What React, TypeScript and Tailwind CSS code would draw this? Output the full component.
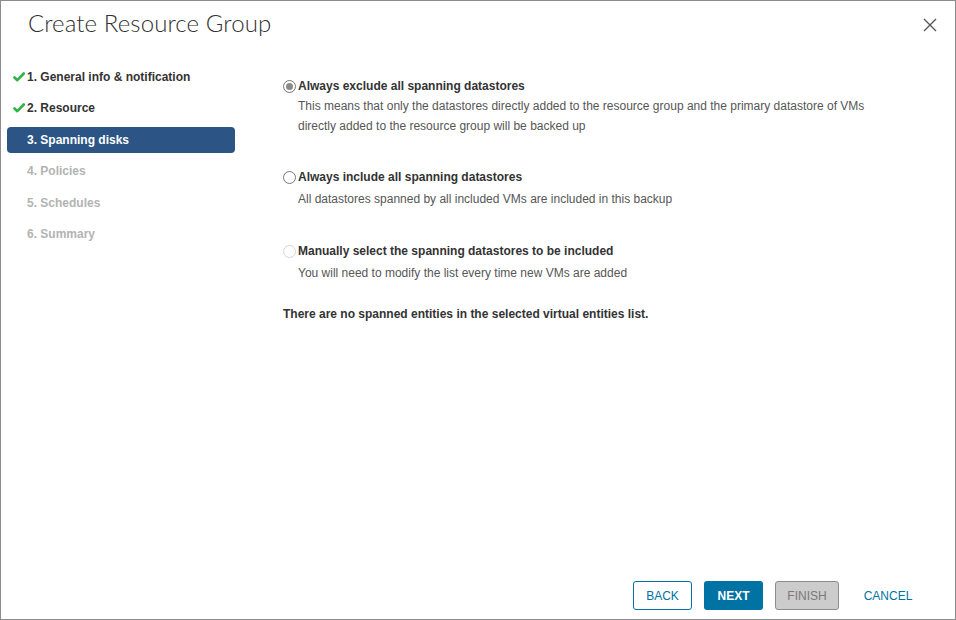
import React, { useState } from 'react';

// Kroki kreatora po lewej
const STEPS = [
  { label: '1. General info & notification', state: 'done' },
  { label: '2. Resource', state: 'done' },
  { label: '3. Spanning disks', state: 'active' },
  { label: '4. Policies', state: 'todo' },
  { label: '5. Schedules', state: 'todo' },
  { label: '6. Summary', state: 'todo' },
];

const OPTIONS = [
  {
    id: 'exclude',
    label: 'Always exclude all spanning datastores',
    desc: [
      'This means that only the datastores directly added to the resource group and the primary datastore of VMs',
      'directly added to the resource group will be backed up',
    ],
    disabled: false,
  },
  {
    id: 'include',
    label: 'Always include all spanning datastores',
    desc: ['All datastores spanned by all included VMs are included in this backup'],
    disabled: false,
  },
  {
    id: 'manual',
    label: 'Manually select the spanning datastores to be included',
    desc: ['You will need to modify the list every time new VMs are added'],
    disabled: true,
  },
];

function Check() {
  return (
    <svg width="12" height="10" viewBox="0 0 12 10" className="absolute left-[6px] top-[8px]">
      <path d="M1.5 5.5 L4.3 8.2 L10.8 1.5" fill="none" stroke="#2fb344" strokeWidth="2.6" strokeLinecap="round" strokeLinejoin="round" />
    </svg>
  );
}

function Radio({ checked, disabled }: { checked: boolean; disabled: boolean }) {
  return (
    <span
      className={`w-[13px] h-[13px] rounded-full border flex items-center justify-center bg-white shrink-0 ${
        disabled ? 'border-[#d4d4d4]' : 'border-[#767676]'
      }`}
    >
      {checked && <span className="w-[7px] h-[7px] rounded-full bg-[#8a8a8a]" />}
    </span>
  );
}

export default function App() {
  const [wybor, setWybor] = useState('exclude');

  return (
    <div
      className="w-[956px] h-[620px] bg-white border border-[#8c8c8c] flex flex-col"
      style={{ fontFamily: '"Liberation Sans", Arial, sans-serif' }}
    >
      {/* Nagłówek */}
      <div className="flex items-start justify-between h-[60px] pl-[27px] pr-[15px] pt-[4px]">
        <h1 className="text-[24px] font-light text-[#313131] tracking-[0.1px]" style={{ fontFamily: 'Lato, "Open Sans", sans-serif' }}>
          Create Resource Group
        </h1>
        <button className="mt-[10px] p-[3px]">
          <svg width="14" height="14" viewBox="0 0 14 14">
            <path d="M1 1 L13 13 M13 1 L1 13" stroke="#565656" strokeWidth="1.4" />
          </svg>
        </button>
      </div>

      <div className="flex flex-1">
        {/* Kroki */}
        <nav className="w-[240px] pl-[6px] pt-[2.5px] flex flex-col gap-[5.5px]">
          {STEPS.map((s) => (
            <div
              key={s.label}
              className={`relative h-[26px] w-[228px] pl-[20px] flex items-center text-[12px] font-bold rounded-[4px] ${
                s.state === 'active'
                  ? 'bg-[#2c5585] text-white'
                  : s.state === 'done'
                  ? 'text-[#333]'
                  : 'text-[#b3b3b3]'
              }`}
            >
              {s.state === 'done' && <Check />}
              {s.label}
            </div>
          ))}
        </nav>

        {/* Treść */}
        <main className="flex-1 pl-[42px] pt-[15px] text-[12px]">
          {OPTIONS.map((o, i) => (
            <div key={o.id} className={i === 0 ? '' : i === 1 ? 'mt-[31px]' : 'mt-[32px]'}>
              <label
                className="flex items-center gap-[2px] h-[20px] font-bold text-[#333] cursor-pointer"
                onClick={() => !o.disabled && setWybor(o.id)}
              >
                <Radio checked={wybor === o.id} disabled={o.disabled} />
                {o.label}
              </label>
              <div className={`pl-[15px] text-[#565656] leading-[20px] ${i === 0 ? '' : 'mt-[2px]'}`}>
                {o.desc.map((d) => (
                  <div key={d}>{d}</div>
                ))}
              </div>
            </div>
          ))}
          <p className="mt-[21px] leading-[20px] font-bold text-[#333]">
            There are no spanned entities in the selected virtual entities list.
          </p>
        </main>
      </div>

      {/* Przyciski */}
      <div className="flex justify-end items-center gap-[12px] pr-[30px] pb-[9px] text-[12px]">
        <button className="h-[29px] w-[59px] rounded-[3px] border border-[#0072a3] text-[#0072a3] bg-white">BACK</button>
        <button className="h-[29px] w-[59px] rounded-[3px] bg-[#0072a3] text-white font-bold">NEXT</button>
        <button className="h-[29px] w-[64px] rounded-[3px] border border-[#8c8c8c] bg-[#cccccc] text-[#7a7a7a]">FINISH</button>
        <button className="h-[29px] w-[74px] text-[#0072a3]">CANCEL</button>
      </div>
    </div>
  );
}
